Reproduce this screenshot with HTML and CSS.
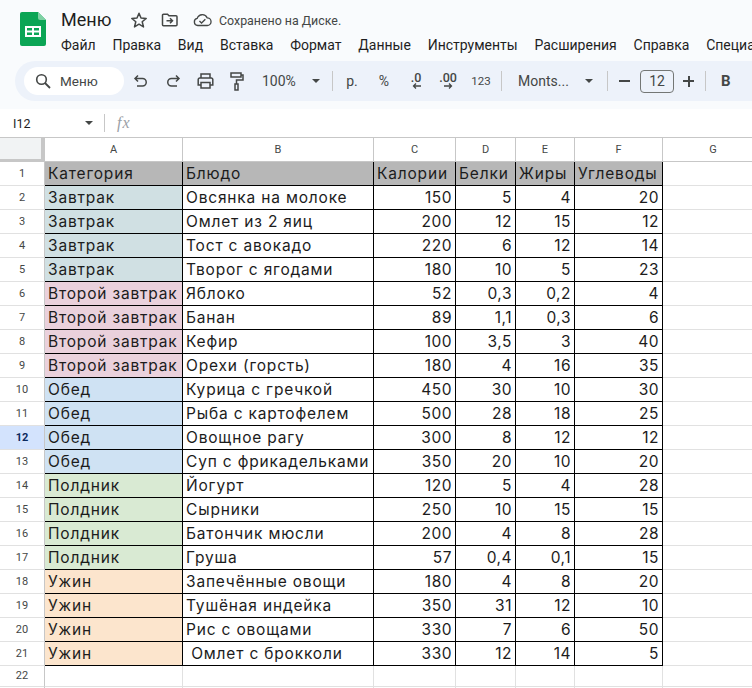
FILE: index.html
```html
<!DOCTYPE html>
<html lang="ru">
<head>
<meta charset="utf-8">
<title>Меню</title>
<link rel="stylesheet" href="styles.css">
</head>
<body>
<header class="top">
  <div class="titlebar">
    <svg class="logo" width="26" height="34" viewBox="0 0 26 34"><path d="M2 0h16l8 8v24a2 2 0 0 1-2 2H2a2 2 0 0 1-2-2V2a2 2 0 0 1 2-2z" fill="#0ba555"/><path d="M18 0l8 8h-6a2 2 0 0 1-2-2z" fill="#7fd1a4"/><path d="M5 14h16v11H5zM7 16v2.5h5V16zm7 0v2.5h5V16zM7 20.500V23h5v-2.500zm7 0V23h5v-2.500z" fill="#fff" fill-rule="evenodd"/></svg>
    <div class="titlecol">
      <div class="titlerow">
        <span class="doc">Меню</span>
        <svg class="star" width="18" height="18" viewBox="0 0 18 18"><path d="M9 2.200l2 4.800 5.200.4-4 3.400 1.300 5.100L9 13.200l-4.500 2.700 1.300-5.100-4-3.400L7 7z" fill="none" stroke="#444746" stroke-width="1.500" stroke-linejoin="round"/></svg>
        <svg class="move" width="18" height="16" viewBox="0 0 18 16"><path d="M1.500 3.200a1 1 0 0 1 1-1h4l1.500 1.600h7a1 1 0 0 1 1 1v8a1 1 0 0 1-1 1h-12.500a1 1 0 0 1-1-1z" fill="none" stroke="#444746" stroke-width="1.500"/><path d="M5.500 8.800h6M9 6.300l2.500 2.500L9 11.300" fill="none" stroke="#444746" stroke-width="1.500"/></svg>
        <svg class="cloud" width="19" height="14" viewBox="0 0 20 14"><path d="M5 12.800a3.800 3.800 0 0 1-.6-7.500A5.700 5.700 0 0 1 15 4.800a4 4 0 0 1 0 8z" fill="none" stroke="#444746" stroke-width="1.400"/><path d="M6.800 8l2.200 2.200 4-4" fill="none" stroke="#444746" stroke-width="1.400"/></svg>
        <span class="saved">Сохранено на Диске.</span>
      </div>
      <nav class="menu">
        <span>Файл</span><span>Правка</span><span>Вид</span><span>Вставка</span><span>Формат</span><span>Данные</span><span>Инструменты</span><span>Расширения</span><span>Справка</span><span>Специальные</span>
      </nav>
    </div>
  </div>
  <div class="toolbar">
    <div class="search">
      <svg width="16" height="16" viewBox="0 0 16 16"><circle cx="6.500" cy="6.500" r="4.800" fill="none" stroke="#444746" stroke-width="1.600"/><path d="M10 10l5 5" stroke="#444746" stroke-width="1.800"/></svg>
      <span>Меню</span>
    </div>
    <span class="btn"><svg width="16" height="14" viewBox="0 0 16 14"><path d="M5 1.500L2 4.500l3 3M2.500 4.500h7a3.700 3.700 0 0 1 0 7.500H4" fill="none" stroke="#444746" stroke-width="1.500"/></svg></span>
    <span class="btn"><svg width="16" height="14" viewBox="0 0 16 14"><path d="M11 1.500l3 3-3 3M13.500 4.500h-7a3.700 3.700 0 0 0 0 7.500H12" fill="none" stroke="#444746" stroke-width="1.500"/></svg></span>
    <span class="btn"><svg width="17" height="16" viewBox="0 0 17 16"><path d="M4 5V1h9v4M4 12H1.200V6.500a1.500 1.500 0 0 1 1.500-1.500h11.600a1.500 1.500 0 0 1 1.500 1.500V12H13" fill="none" stroke="#444746" stroke-width="1.500"/><path d="M4 9.500h9V15H4z" fill="none" stroke="#444746" stroke-width="1.500"/></svg></span>
    <span class="btn"><svg width="14" height="19" viewBox="0 0 14 19"><path d="M1 1h10v4H1zM11 3h2v5H6.500v4" fill="none" stroke="#444746" stroke-width="1.500"/><path d="M5 12h3v6H5z" fill="none" stroke="#444746" stroke-width="1.500"/></svg></span>
    <span class="zoomval">100%</span>
    <span class="caret zoomcaret"></span>
    <span class="sep sep-zoom"></span>
    <span class="btn txt">р.</span>
    <span class="btn txt">%</span>
    <span class="btn dec"><span>.0</span><svg width="9" height="6" viewBox="0 0 9 6"><path d="M9 3H2M4 .5L1.500 3 4 5.500" fill="none" stroke="#444746" stroke-width="1.300"/></svg></span>
    <span class="btn dec"><span>.00</span><svg width="9" height="6" viewBox="0 0 9 6"><path d="M0 3h7M5 .5L7.500 3 5 5.500" fill="none" stroke="#444746" stroke-width="1.300"/></svg></span>
    <span class="btn small">123</span>
    <span class="sep sep-fmt"></span>
    <span class="fontname">Monts...</span>
    <span class="caret fontcaret"></span>
    <span class="sep sep-font"></span>
    <span class="minus"></span>
    <span class="size">12</span>
    <span class="plus"></span>
    <span class="sep sep-size"></span>
    <span class="bold">B</span>
  </div>
</header>
<div class="formula">
  <span class="cellref">I12</span>
  <span class="caret refcaret"></span>
  <span class="fsep"></span>
  <span class="fx">fx</span>
</div>
<table class="sheet">
  <colgroup><col class="c0"><col class="c1"><col class="c2"><col class="c3"><col class="c4"><col class="c5"><col class="c6"><col class="c7"></colgroup>
  <thead><tr><th class="corner"></th><th>A</th><th>B</th><th>C</th><th>D</th><th>E</th><th>F</th><th>G</th></tr></thead>
  <tbody>
    <tr class="hd"><th>1</th><td>Категория</td><td>Блюдо</td><td>Калории</td><td>Белки</td><td>Жиры</td><td>Углеводы</td><td class="e"></td></tr>
    <tr class="bf"><th>2</th><td>Завтрак</td><td>Овсянка на молоке</td><td class="n">150</td><td class="n">5</td><td class="n">4</td><td class="n">20</td><td class="e"></td></tr>
    <tr class="bf"><th>3</th><td>Завтрак</td><td>Омлет из 2 яиц</td><td class="n">200</td><td class="n">12</td><td class="n">15</td><td class="n">12</td><td class="e"></td></tr>
    <tr class="bf"><th>4</th><td>Завтрак</td><td>Тост с авокадо</td><td class="n">220</td><td class="n">6</td><td class="n">12</td><td class="n">14</td><td class="e"></td></tr>
    <tr class="bf"><th>5</th><td>Завтрак</td><td>Творог с ягодами</td><td class="n">180</td><td class="n">10</td><td class="n">5</td><td class="n">23</td><td class="e"></td></tr>
    <tr class="sb"><th>6</th><td>Второй завтрак</td><td>Яблоко</td><td class="n">52</td><td class="n">0,3</td><td class="n">0,2</td><td class="n">4</td><td class="e"></td></tr>
    <tr class="sb"><th>7</th><td>Второй завтрак</td><td>Банан</td><td class="n">89</td><td class="n">1,1</td><td class="n">0,3</td><td class="n">6</td><td class="e"></td></tr>
    <tr class="sb"><th>8</th><td>Второй завтрак</td><td>Кефир</td><td class="n">100</td><td class="n">3,5</td><td class="n">3</td><td class="n">40</td><td class="e"></td></tr>
    <tr class="sb"><th>9</th><td>Второй завтрак</td><td>Орехи (горсть)</td><td class="n">180</td><td class="n">4</td><td class="n">16</td><td class="n">35</td><td class="e"></td></tr>
    <tr class="ln"><th>10</th><td>Обед</td><td>Курица с гречкой</td><td class="n">450</td><td class="n">30</td><td class="n">10</td><td class="n">30</td><td class="e"></td></tr>
    <tr class="ln"><th>11</th><td>Обед</td><td>Рыба с картофелем</td><td class="n">500</td><td class="n">28</td><td class="n">18</td><td class="n">25</td><td class="e"></td></tr>
    <tr class="ln"><th class="active">12</th><td>Обед</td><td>Овощное рагу</td><td class="n">300</td><td class="n">8</td><td class="n">12</td><td class="n">12</td><td class="e"></td></tr>
    <tr class="ln"><th>13</th><td>Обед</td><td>Суп с фрикадельками</td><td class="n">350</td><td class="n">20</td><td class="n">10</td><td class="n">20</td><td class="e"></td></tr>
    <tr class="sn"><th>14</th><td>Полдник</td><td>Йогурт</td><td class="n">120</td><td class="n">5</td><td class="n">4</td><td class="n">28</td><td class="e"></td></tr>
    <tr class="sn"><th>15</th><td>Полдник</td><td>Сырники</td><td class="n">250</td><td class="n">10</td><td class="n">15</td><td class="n">15</td><td class="e"></td></tr>
    <tr class="sn"><th>16</th><td>Полдник</td><td>Батончик мюсли</td><td class="n">200</td><td class="n">4</td><td class="n">8</td><td class="n">28</td><td class="e"></td></tr>
    <tr class="sn"><th>17</th><td>Полдник</td><td>Груша</td><td class="n">57</td><td class="n">0,4</td><td class="n">0,1</td><td class="n">15</td><td class="e"></td></tr>
    <tr class="dn"><th>18</th><td>Ужин</td><td>Запечённые овощи</td><td class="n">180</td><td class="n">4</td><td class="n">8</td><td class="n">20</td><td class="e"></td></tr>
    <tr class="dn"><th>19</th><td>Ужин</td><td>Тушёная индейка</td><td class="n">350</td><td class="n">31</td><td class="n">12</td><td class="n">10</td><td class="e"></td></tr>
    <tr class="dn"><th>20</th><td>Ужин</td><td>Рис с овощами</td><td class="n">330</td><td class="n">7</td><td class="n">6</td><td class="n">50</td><td class="e"></td></tr>
    <tr class="dn"><th>21</th><td>Ужин</td><td> Омлет с брокколи</td><td class="n">330</td><td class="n">12</td><td class="n">14</td><td class="n">5</td><td class="e"></td></tr>
    <tr class="blank"><th>22</th><td></td><td></td><td></td><td></td><td></td><td></td><td></td></tr>
    <tr class="blank"><th></th><td></td><td></td><td></td><td></td><td></td><td></td><td></td></tr>
  </tbody>
</table>
</body>
</html>
```
FILE: styles.css
```css
* { box-sizing: border-box; }
html, body { margin: 0; height: 688px; overflow: hidden; background: #fff; }
body { width: 752px; font-family: "Roboto", "Liberation Sans", sans-serif; color: #1f1f1f; }

.top { height: 109px; background: #f9fbfd; overflow: hidden; }
.titlebar { display: flex; height: 61px; padding: 9px 0 0 20px; }
.logo { flex: none; margin-top: 3px; }
.titlecol { margin-left: 15px; flex: none; width: 691px; overflow: hidden; }
.titlerow { display: flex; align-items: center; height: 22px; }
.doc { font-size: 18px; line-height: 22px; width: 69px; color: #1f1f1f; }
.star { margin-right: 13px; }
.move { margin-right: 14px; }
.cloud { margin-right: 7px; }
.saved { font-size: 12.400px; color: #444746; }
.menu { display: flex; gap: 16.800px; margin-top: 5px; font-size: 14px; line-height: 18px; white-space: nowrap; color: #1f1f1f; }

.toolbar { display: flex; align-items: center; height: 40px; margin-left: 15px; width: 737px; padding-left: 9px; background: #edf2fa; border-radius: 20px 0 0 20px; color: #444746; white-space: nowrap; }
.search { display: flex; align-items: center; width: 100px; height: 28px; padding-left: 11px; background: #fff; border-radius: 14px; font-size: 13.500px; flex: none; }
.search span { margin-left: 9px; }
.btn { flex: none; display: flex; flex-direction: column; align-items: center; justify-content: center; width: 32px; height: 28px; }
.search + .btn { margin-left: 1px; }
.txt { font-size: 14px; }
.small { font-size: 11.500px; margin-left: 1px; }
.dec { font-size: 12.500px; line-height: 10px; font-weight: 500; }
.zoomval { flex: none; font-size: 14px; margin-left: 9px; width: 50px; }
.caret { flex: none; width: 0; height: 0; border-left: 4.500px solid transparent; border-right: 4.500px solid transparent; border-top: 4.500px solid #444746; }
.sep { flex: none; width: 1px; height: 20px; background: #c7c7c7; }
.sep-zoom { margin: 0 3px 0 12px; }
.sep-fmt { margin: 0 16px 0 4px; }
.fontname { flex: none; width: 67px; font-size: 14px; }
.sep-font { margin: 0 11px 0 14px; }
.minus { flex: none; width: 11px; height: 2px; background: #444746; }
.size { flex: none; width: 34px; height: 23px; margin-left: 10px; border: 1px solid #747775; border-radius: 4px; font-size: 14px; line-height: 21px; text-align: center; }
.plus { flex: none; width: 11px; height: 11px; margin-left: 9px; background: linear-gradient(#444746,#444746) center/11px 2px no-repeat, linear-gradient(#444746,#444746) center/2px 11px no-repeat; }
.sep-size { margin: 0 15px 0 11px; }
.bold { flex: none; font-size: 15px; font-weight: 700; }

.formula { display: flex; align-items: center; height: 28px; background: #fff; padding-left: 13px; }
.cellref { width: 72px; font-size: 12.500px; color: #1f1f1f; }
.fsep { width: 1px; height: 18px; margin-left: 11px; background: #c7c7c7; }
.fx { margin-left: 12px; font-family: "Liberation Serif", serif; font-style: italic; font-size: 16px; letter-spacing: 1px; color: #9aa0a6; }

.sheet { table-layout: fixed; width: 764px; border-collapse: separate; border-spacing: 0; border-top: 1px solid #c7c7c7; font-family: "Inter", "Noto Sans", sans-serif; font-size: 15.500px; letter-spacing: .82px; color: #1c1c1c; }
.c0 { width: 45px; } .c1 { width: 138px; } .c2 { width: 191px; } .c3 { width: 82px; }
.c4 { width: 60px; } .c5 { width: 59px; } .c6 { width: 88px; } .c7 { width: 101px; }
.sheet tr { height: 24px; }
.sheet th { padding: 0; font: 400 11px/14px "Roboto", sans-serif; letter-spacing: 0; color: #444746; background: #fff; border-right: 1px solid #c7c7c7; border-bottom: 1px solid #c7c7c7; text-align: center; }
.sheet .corner { background: #f1f3f4; border-right: 4px solid #c7c7c7; border-bottom: 3px solid #c7c7c7; }
.sheet tbody th { border-bottom-color: #e1e1e1; }
.sheet td { padding: 0 3px; line-height: 20px; white-space: pre; overflow: hidden; border-right: 1px solid #000; border-bottom: 1px solid #000; }
.sheet td.n { text-align: right; letter-spacing: .5px; }
.sheet td.e { border-right: 1px solid #e1e1e1; border-bottom: 1px solid #e1e1e1; }
.sheet th.active { background: #d3e3fd; font-weight: 700; color: #0b2a5e; }
.hd td { background: #b7b7b7; }
.hd td.e { background: #fff; }
.bf td:nth-child(2) { background: #d0e0e3; }
.sb td:nth-child(2) { background: #ead1dc; }
.ln td:nth-child(2) { background: #cfe2f3; }
.sn td:nth-child(2) { background: #d9ead3; }
.dn td:nth-child(2) { background: #fce5cd; }
.sheet tr.blank { height: 21px; }
.sheet .blank td { border-right: 1px solid #e1e1e1; border-bottom: 1px solid #e1e1e1; }
```
